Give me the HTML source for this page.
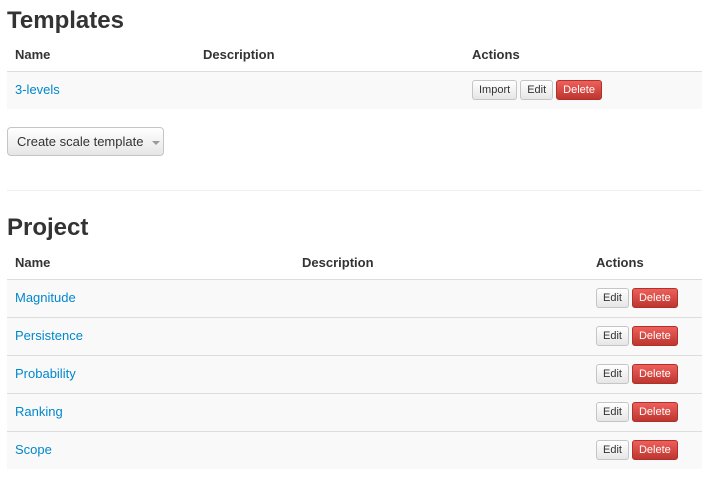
<!DOCTYPE html>
<html><head><style>
body{margin:0;background:#fff;font-family:"Liberation Sans",sans-serif;color:#333;width:702px;height:483px;overflow:hidden;position:relative}
h2{position:absolute;left:7px;margin:0;font-size:24px;font-weight:bold;color:#333;line-height:30px}
.t{position:absolute;left:7px;width:695px;border-collapse:collapse;font-size:13px}
.t th{text-align:left;padding:0 8px;height:34px;font-weight:bold;border-bottom:1px solid #ddd}
.t td{padding:0 8px 2px;height:35px;background:#f9f9f9;border-top:1px solid #ddd}
.t tr:nth-child(2) td{border-top:none}
a{color:#0088cc;text-decoration:none}
.b{display:inline-block;font-size:11px;line-height:18px;padding:0 6px;border:1px solid #c5c5c5;border-radius:3px;background:linear-gradient(#fff,#e6e6e6);color:#333;margin-right:3px;vertical-align:middle}
.d{background:linear-gradient(#ee5f5b,#bd362f);border-color:#b0302a;color:#fff}
.c{position:absolute;left:7px;top:127px;width:155px;height:27px;border:1px solid #c5c5c5;border-radius:4px;background:linear-gradient(#fff,#e6e6e6);font-size:13px;line-height:27px;box-sizing:content-box}
.c span{margin-left:9px}
.car{display:inline-block;border-left:4px solid transparent;border-right:4px solid transparent;border-top:4px solid #999;margin-left:5px;vertical-align:middle}
hr{position:absolute;left:7px;width:695px;margin:0;border:none;border-top:1px solid #eee}
</style></head><body>
<h2 style="top:6px">Templates</h2>
<table class="t" style="top:37px">
<tr><th style="width:172px">Name</th><th style="width:253px">Description</th><th>Actions</th></tr>
<tr><td><a>3-levels</a></td><td></td><td><span class="b">Import</span><span class="b">Edit</span><span class="b d">Delete</span></td></tr>
</table>
<div class="c"><span>Create scale template</span><span class="car"></span></div>
<hr style="top:190px">
<h2 style="top:213px">Project</h2>
<table class="t" style="top:245px">
<tr><th style="width:271px">Name</th><th style="width:278px">Description</th><th>Actions</th></tr>
<tr><td><a>Magnitude</a></td><td></td><td><span class="b">Edit</span><span class="b d">Delete</span></td></tr>
<tr><td><a>Persistence</a></td><td></td><td><span class="b">Edit</span><span class="b d">Delete</span></td></tr>
<tr><td><a>Probability</a></td><td></td><td><span class="b">Edit</span><span class="b d">Delete</span></td></tr>
<tr><td><a>Ranking</a></td><td></td><td><span class="b">Edit</span><span class="b d">Delete</span></td></tr>
<tr><td><a>Scope</a></td><td></td><td><span class="b">Edit</span><span class="b d">Delete</span></td></tr>
</table>
</body></html>
